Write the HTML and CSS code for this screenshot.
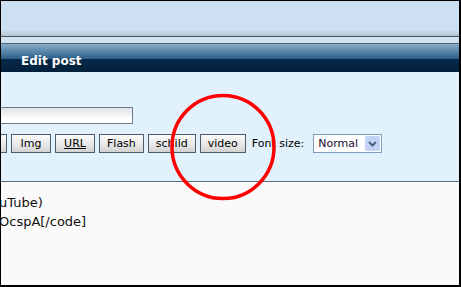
FILE: index.html
```html
<!DOCTYPE html>
<html lang="en">
<head>
    <meta charset="UTF-8">
    <title>Edit post</title>
    <link rel="stylesheet" href="styles.css">
</head>
<body>
    <div class="frame">
        <div class="topbar"></div>
        <div class="strip"></div>
        <div class="header">Edit post</div>

        <div class="panel">
            <input class="subject" type="text" value="">
            <div class="toolbar">
                <button class="btn first"></button>
                <button class="btn">Img</button>
                <button class="btn"><u>URL</u></button>
                <button class="btn">Flash</button>
                <button class="btn">schild</button>
                <button class="btn">video</button>
                <label class="size-label">Font size:</label>
                <div class="select">
                    <span>Normal</span>
                    <span class="arrow">
                        <svg width="9" height="6" viewBox="0 0 9 6"><path d="M1 1 L4.5 4.5 L8 1" fill="none" stroke="#4d6185" stroke-width="2"/></svg>
                    </span>
                </div>
            </div>
        </div>

        <div class="message">
            <p>uTube)</p>
            <p>OcspA[/code]</p>
        </div>

        <svg class="mark" width="112" height="112" viewBox="0 0 112 112">
            <ellipse cx="56" cy="56" rx="51" ry="51.5" fill="none" stroke="#f00" stroke-width="3.5"/>
        </svg>
    </div>
</body>
</html>
```

FILE: styles.css
```css
* {
    margin: 0;
    padding: 0;
    box-sizing: border-box;
}
body {
    font-family: "DejaVu Sans", Verdana, sans-serif;
}
.frame {
    position: relative;
    width: 461px;
    height: 287px;
    border: 1px solid #000;
    border-right-width: 2px;
    border-bottom-width: 2px;
    overflow: hidden;
    background: #fafafa;
}
.topbar {
    height: 36px;
    background: linear-gradient(#cce0f1 0, #cce0f1 29px, #b4c2ce 35px);
    border-bottom: 1px solid #4a545e;
}
.strip {
    height: 7px;
    background: #d0e3f3;
    border-bottom: 1px solid #56626e;
}
.header {
    height: 28px;
    padding: 10px 0 0 20px;
    color: #fff;
    font-weight: bold;
    font-size: 12px;
    background: linear-gradient(#88abc9 0, #4a7aa0 10px, #2a5a82 15px, #06294a 15px, #02203a 28px);
}
.panel {
    height: 110px;
    padding-top: 35px;
    background: #e1f2fd;
    border-bottom: 1px solid #5a6c7c;
}
.subject {
    display: block;
    width: 200px;
    height: 17px;
    margin-left: -68px;
    border: 1px solid #6e7a86;
    background: linear-gradient(#dbe2e9, #fff 70%);
}
.toolbar {
    display: flex;
    align-items: center;
    gap: 4px;
    margin-top: 10px;
}
.btn {
    height: 19px;
    min-width: 40px;
    padding: 0 7px;
    font-family: "DejaVu Sans", Verdana, sans-serif;
    font-size: 11px;
    color: #000;
    border: 1px solid #4e5c6a;
    background: linear-gradient(#fbfbfb, #e6e6e6 60%, #d2d2d2);
}
.btn.first {
    width: 44px;
    margin-left: -38px;
}
.size-label {
    margin-left: 2px;
    font-size: 11px;
    color: #000;
}
.select {
    display: flex;
    align-items: center;
    justify-content: space-between;
    width: 69px;
    height: 19px;
    margin-left: 5px;
    padding: 0 1px 0 4px;
    font-size: 11px;
    color: #1a0a30;
    background: #fff;
    border: 1px solid #7f9db9;
}
.arrow {
    display: flex;
    align-items: center;
    justify-content: center;
    width: 15px;
    height: 15px;
    background: #c3d3f7;
    border-radius: 2px;
}
.message {
    padding-top: 11px;
    font-size: 13px;
    line-height: 19px;
    color: #111;
}
.message p {
    margin-left: -2px;
}
.mark {
    position: absolute;
    left: 166px;
    top: 90px;
}
```
